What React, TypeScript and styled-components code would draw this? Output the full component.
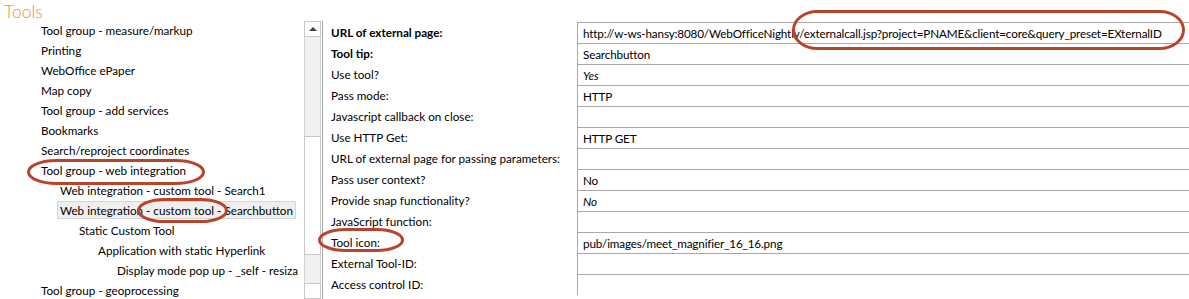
import React from 'react'
import styled, { createGlobalStyle } from 'styled-components'

const GlobalStyle = createGlobalStyle`
  html, body {
    margin: 0;
    padding: 0;
    background: #fff;
  }
  body {
    font-family: Lato, 'Noto Sans', sans-serif;
    font-size: 11.7px;
    color: #000;
  }
`

const Page = styled.div`
  position: relative;
  width: 1189px;
  height: 299px;
  overflow: hidden;
`

const Title = styled.div`
  height: 18px;
  padding: 2px 0 0 4px;
  line-height: 20px;
  font-size: 17.5px;
  font-weight: 300;
  color: #ea9434;
`

const Body = styled.div`
  display: flex;
  height: 279px;
`

const Tree = styled.div`
  flex: none;
  width: 298px;
  overflow: hidden;
  white-space: nowrap;
`

const TreeRow = styled.div<{ $level: number }>`
  height: 20px;
  display: flex;
  align-items: center;
  padding-left: ${(p) => 38 + p.$level * 19}px;
`

const TreeLabel = styled.span<{ $selected?: boolean }>`
  display: inline-block;
  height: 16px;
  line-height: 16px;
  padding: 0 2px;
  border: 1px solid ${(p) => (p.$selected ? '#d6d6d6' : 'transparent')};
  background: ${(p) => (p.$selected ? '#efefef' : 'transparent')};
`

const Scrollbar = styled.div`
  flex: none;
  width: 15px;
  margin: 1px 0 0 6px;
  display: flex;
  flex-direction: column;
  background: #f0f0f0;
  border-left: 1px solid #d4d4d4;
  border-right: 1px solid #d4d4d4;
`

const ScrollButton = styled.div`
  height: 15px;
  background: #fff;
  border: 1px solid #c8c8c8;
  margin: 0 -1px;
  display: flex;
  align-items: center;
  justify-content: center;
`

const Arrow = styled.div`
  width: 0;
  height: 0;
  border-left: 4px solid transparent;
  border-right: 4px solid transparent;
  border-bottom: 4px solid #404040;
`

const ScrollThumb = styled.div`
  margin: 99px -1px 0;
  height: 126px;
  background: #fff;
  border: 1px solid #c8c8c8;
`

const ScrollSpacer = styled.div`
  height: 30px;
`

const Grid = styled.div`
  flex: 1;
  margin: 1px 0 0 1px;
  border-left: 1px solid #a8a8a8;
  padding-top: 1px;
  display: grid;
  grid-template-columns: 254px 1fr;
  grid-auto-rows: 21px;
  align-content: start;
`

const Label = styled.div<{ $bold?: boolean }>`
  padding-left: 8px;
  line-height: 21px;
  font-weight: ${(p) => (p.$bold ? 700 : 400)};
  white-space: nowrap;
`

const Value = styled.div<{ $italic?: boolean }>`
  border-top: 1px solid #a8a8a8;
  border-left: 1px solid #a8a8a8;
  padding-left: 5px;
  line-height: 20px;
  letter-spacing: -0.15px;
  font-style: ${(p) => (p.$italic ? 'italic' : 'normal')};
  white-space: nowrap;
  overflow: hidden;
`

const Marks = styled.svg`
  position: absolute;
  left: 0;
  top: 0;
  pointer-events: none;
`

const treeItems: { text: string; level: number; selected?: boolean }[] = [
  { text: 'Tool group - measure/markup', level: 0 },
  { text: 'Printing', level: 0 },
  { text: 'WebOffice ePaper', level: 0 },
  { text: 'Map copy', level: 0 },
  { text: 'Tool group - add services', level: 0 },
  { text: 'Bookmarks', level: 0 },
  { text: 'Search/reproject coordinates', level: 0 },
  { text: 'Tool group - web integration', level: 0 },
  { text: 'Web integration - custom tool - Search1', level: 1 },
  { text: 'Web integration - custom tool - Searchbutton', level: 1, selected: true },
  { text: 'Static Custom Tool', level: 2 },
  { text: 'Application with static Hyperlink', level: 3 },
  { text: 'Display mode pop up - _self - resizable', level: 4 },
  { text: 'Tool group - geoprocessing', level: 0 }
]

const props: { label: string; value: string; bold?: boolean; italic?: boolean }[] = [
  {
    label: 'URL of external page:',
    value:
      'http://w-ws-hansy:8080/WebOfficeNightly/externalcall.jsp?project=PNAME&client=core&query_preset=EXternalID',
    bold: true
  },
  { label: 'Tool tip:', value: 'Searchbutton', bold: true },
  { label: 'Use tool?', value: 'Yes', italic: true },
  { label: 'Pass mode:', value: 'HTTP' },
  { label: 'Javascript callback on close:', value: '' },
  { label: 'Use HTTP Get:', value: 'HTTP GET' },
  { label: 'URL of external page for passing parameters:', value: '' },
  { label: 'Pass user context?', value: 'No' },
  { label: 'Provide snap functionality?', value: 'No', italic: true },
  { label: 'JavaScript function:', value: '' },
  { label: 'Tool icon:', value: 'pub/images/meet_magnifier_16_16.png' },
  { label: 'External Tool-ID:', value: '' },
  { label: 'Access control ID:', value: '' }
]

// red annotation rings drawn over the screenshot
const rings = [
  { x: 28.5, y: 160.5, w: 175, h: 23, rx: 28, ry: 11.5 },
  { x: 138.5, y: 199.5, w: 88, h: 22, rx: 26, ry: 11 },
  { x: 319.5, y: 229.5, w: 83, h: 21, rx: 26, ry: 10.5 },
  { x: 793.5, y: 11.5, w: 390, h: 37, rx: 24, ry: 18.5 }
]

const App = () => {
  return (
    <Page>
      <GlobalStyle />
      <Title>Tools</Title>
      <Body>
        <Tree>
          {treeItems.map((item, i) => (
            <TreeRow key={`tree-${i}`} $level={item.level}>
              <TreeLabel $selected={item.selected}>{item.text}</TreeLabel>
            </TreeRow>
          ))}
        </Tree>
        <Scrollbar>
          <ScrollButton>
            <Arrow />
          </ScrollButton>
          <ScrollThumb />
          <ScrollSpacer />
          <ScrollButton />
        </Scrollbar>
        <Grid>
          {props.map((p, i) => (
            <React.Fragment key={`prop-${i}`}>
              <Label $bold={p.bold}>{p.label}</Label>
              <Value $italic={p.italic}>{p.value}</Value>
            </React.Fragment>
          ))}
        </Grid>
      </Body>
      <Marks width={1189} height={299}>
        {rings.map((r, i) => (
          <rect
            key={`ring-${i}`}
            x={r.x}
            y={r.y}
            width={r.w}
            height={r.h}
            rx={r.rx}
            ry={r.ry}
            fill='none'
            stroke='#b8452b'
            strokeWidth={3}
          />
        ))}
      </Marks>
    </Page>
  )
}

export default App
